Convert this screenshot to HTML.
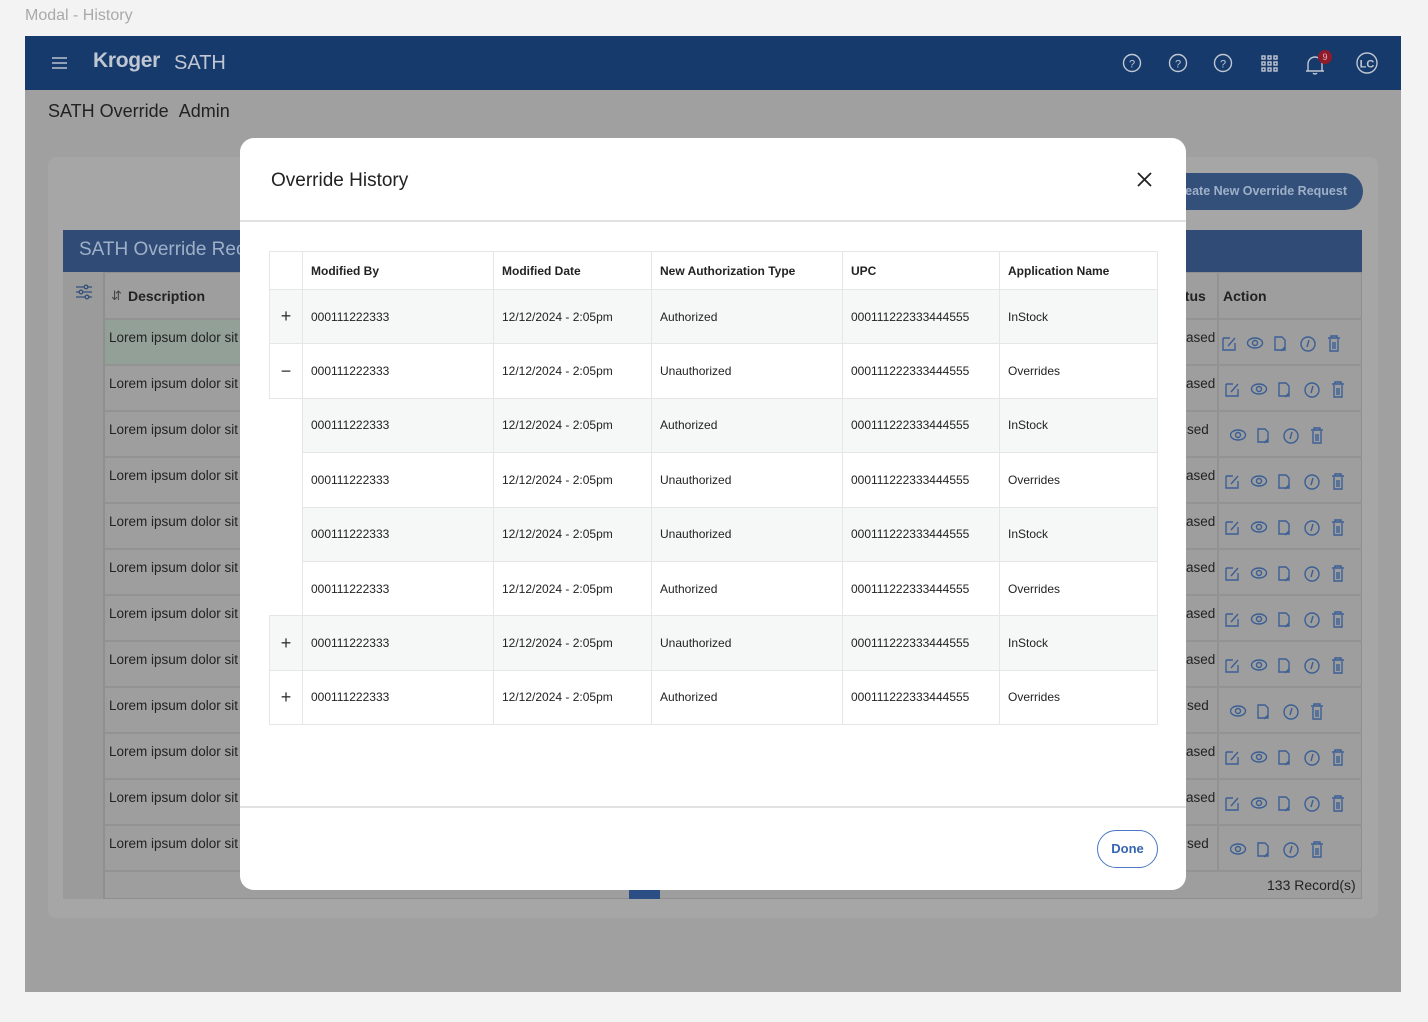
<!DOCTYPE html>
<html><head><meta charset="utf-8"><style>
*{box-sizing:border-box;margin:0;padding:0}
body{width:1428px;height:1022px;background:#f3f3f3;font-family:"Liberation Sans",Arial,sans-serif;position:relative;overflow:hidden}
.a{position:absolute}
.ttl{left:25px;top:7px;font-size:16px;color:#a9a9a9}
.frame{left:25px;top:36px;width:1376px;height:956px;background:#a0a0a0}
.hdr{left:25px;top:36px;width:1376px;height:54px;background:#163a6b}
.brow{position:absolute;left:105px;width:1257px;height:46px;border-bottom:2px solid #939393;font-size:13.5px;color:#222}
.brow .d{position:absolute;left:4px;top:10px}
.brow .s{position:absolute;left:1081px;top:10px}
.brow svg{position:absolute;top:15px}
.modal{left:240px;top:138px;width:946px;height:752px;background:#fff;border-radius:14px}
table{border-collapse:collapse;position:absolute;left:269px;top:251px;font-size:12px;color:#222}
td,th{border:1px solid #e6e6e6;text-align:left;padding:0 0 0 8px;height:54.4px}
th{height:38px;font-weight:bold}
tr.g td{background:#f6f7f7}
td.x{padding:0;text-align:center;font-size:18px;color:#333}
td.n{border:none;border-right:1px solid #e6e6e6;background:#fff!important}
</style></head><body>
<div class="a ttl">Modal - History</div>
<div class="a frame"></div>
<div class="a hdr"></div>
<svg class="a" style="left:52px;top:56px" width="16" height="14"><path d="M0 2H15M0 7H15M0 12H15" stroke="#b9c2cf" stroke-width="1.6"/></svg>
<div class="a" style="left:93px;top:49px;font-size:21px;font-weight:bold;color:#c0c7d2;letter-spacing:-0.3px">Kroger</div>
<div class="a" style="left:174px;top:52px;font-size:20px;color:#c0c7d2">SATH</div>
<svg class="a" style="left:1120px;top:50px" width="270" height="30" fill="none" stroke="#c0c7d2" stroke-width="1.4">
<circle cx="12" cy="13" r="8.5"/><circle cx="58" cy="13" r="8.5"/><circle cx="103" cy="13" r="8.5"/>
<text x="12" y="17.5" font-size="11" fill="#c0c7d2" stroke="none" text-anchor="middle" font-family="Liberation Sans">?</text>
<text x="58" y="17.5" font-size="11" fill="#c0c7d2" stroke="none" text-anchor="middle" font-family="Liberation Sans">?</text>
<text x="103" y="17.5" font-size="11" fill="#c0c7d2" stroke="none" text-anchor="middle" font-family="Liberation Sans">?</text>
<g fill="none"><rect x="142" y="6" width="3" height="3"/><rect x="148" y="6" width="3" height="3"/><rect x="154" y="6" width="3" height="3"/><rect x="142" y="12" width="3" height="3"/><rect x="148" y="12" width="3" height="3"/><rect x="154" y="12" width="3" height="3"/><rect x="142" y="18" width="3" height="3"/><rect x="148" y="18" width="3" height="3"/><rect x="154" y="18" width="3" height="3"/></g>
<path d="M188 21V14a7 7 0 0 1 14 0v7h2H186zM193 23a2.5 2.5 0 0 0 4 0"/>
<circle cx="247" cy="13" r="10"/>
<text x="247" y="17.5" font-size="11" font-weight="bold" fill="#c0c7d2" stroke="none" text-anchor="middle" font-family="Liberation Sans">LC</text>
</svg>
<div class="a" style="left:1318px;top:50px;width:14px;height:14px;border-radius:7px;background:#8e1a2a;color:#e5b7bd;font-size:9px;text-align:center;line-height:14px">9</div>
<div class="a" style="left:48px;top:101px;font-size:18px;color:#222">SATH Override &nbsp;Admin</div>
<div class="a" style="left:48px;top:157px;width:1330px;height:761px;background:#a6a6a6;border-radius:8px"></div>
<div class="a" style="left:1150px;top:173px;width:213px;height:37px;border-radius:19px;background:#33507a;color:#9fb0c8;font-size:12.5px;font-weight:bold;line-height:37px;text-align:right;padding-right:16px;white-space:nowrap;overflow:hidden">Create New Override Request</div>
<div class="a" style="left:63px;top:230px;width:1299px;height:42px;background:#304c76;color:#9fb0c8;font-size:19px;padding:9px 16px">SATH Override Records</div>
<div class="a" style="left:63px;top:272px;width:1299px;height:627px;background:#9e9e9e;border:1px solid #8f8f8f"></div>
<div class="a" style="left:63px;top:272px;width:42px;height:627px;background:#9b9b9b;border-right:2px solid #8f8f8f"></div>
<svg class="a" style="left:75px;top:284px" width="18" height="16" stroke="#33507a" stroke-width="1.3" fill="#9b9b9b"><path d="M1 3H17M1 8H17M1 13H17"/><circle cx="11" cy="3" r="1.8"/><circle cx="6" cy="8" r="1.8"/><circle cx="12" cy="13" r="1.8"/></svg>
<div class="a" style="left:105px;top:272px;width:1257px;height:48px;border-bottom:2px solid #939393"></div>
<div class="a" style="left:111px;top:288px;font-size:13px;color:#444">&#8693;</div>
<div class="a" style="left:128px;top:288px;font-size:14px;font-weight:bold;color:#222">Description</div>
<div class="a" style="left:1163px;top:288px;font-size:14px;font-weight:bold;color:#222">Status</div>
<div class="a" style="left:1223px;top:288px;font-size:14px;font-weight:bold;color:#222">Action</div>
<div class="a" style="left:1217px;top:272px;width:2px;height:600px;background:#929292"></div>
<svg width="0" height="0" style="position:absolute"><defs>
<g id="e" fill="none" stroke="#3b5f95" stroke-width="1.4"><path d="M1 3H8M1 3V15H13V8M6 11L13 3"/></g>
<g id="r" fill="none" stroke="#3b5f95" stroke-width="1.4"><ellipse cx="8" cy="8" rx="7.5" ry="5"/><circle cx="8" cy="8" r="2.5"/><path d="M28 2H35L38 5V15H28ZM38 12L34 16"/><circle cx="61" cy="9" r="7"/><path d="M62 5L60 12"/><path d="M81 3H93M84 3V1H90V3M83 4V16H91V4M86 7V14M88 7V14"/></g>
</defs></svg>
<div class="a" style="left:105px;top:320px;width:300px;height:44px;background:#93a097"></div>
<div class="brow" style="top:320px"><span class="d">Lorem ipsum dolor sit amet</span><span class="s">ased</span><svg style="left:1117px" width="130" height="20"><use href="#e"/><use href="#r" x="25"/></svg></div>
<div class="brow" style="top:366px"><span class="d">Lorem ipsum dolor sit amet</span><span class="s">ased</span><svg style="left:1120px" width="130" height="20"><use href="#e"/><use href="#r" x="26"/></svg></div>
<div class="brow" style="top:412px"><span class="d">Lorem ipsum dolor sit amet</span><span class="s" style="left:1082px">sed</span><svg style="left:1125px" width="130" height="20"><use href="#r"/></svg></div>
<div class="brow" style="top:458px"><span class="d">Lorem ipsum dolor sit amet</span><span class="s">ased</span><svg style="left:1120px" width="130" height="20"><use href="#e"/><use href="#r" x="26"/></svg></div>
<div class="brow" style="top:504px"><span class="d">Lorem ipsum dolor sit amet</span><span class="s">ased</span><svg style="left:1120px" width="130" height="20"><use href="#e"/><use href="#r" x="26"/></svg></div>
<div class="brow" style="top:550px"><span class="d">Lorem ipsum dolor sit amet</span><span class="s">ased</span><svg style="left:1120px" width="130" height="20"><use href="#e"/><use href="#r" x="26"/></svg></div>
<div class="brow" style="top:596px"><span class="d">Lorem ipsum dolor sit amet</span><span class="s">ased</span><svg style="left:1120px" width="130" height="20"><use href="#e"/><use href="#r" x="26"/></svg></div>
<div class="brow" style="top:642px"><span class="d">Lorem ipsum dolor sit amet</span><span class="s">ased</span><svg style="left:1120px" width="130" height="20"><use href="#e"/><use href="#r" x="26"/></svg></div>
<div class="brow" style="top:688px"><span class="d">Lorem ipsum dolor sit amet</span><span class="s" style="left:1082px">sed</span><svg style="left:1125px" width="130" height="20"><use href="#r"/></svg></div>
<div class="brow" style="top:734px"><span class="d">Lorem ipsum dolor sit amet</span><span class="s">ased</span><svg style="left:1120px" width="130" height="20"><use href="#e"/><use href="#r" x="26"/></svg></div>
<div class="brow" style="top:780px"><span class="d">Lorem ipsum dolor sit amet</span><span class="s">ased</span><svg style="left:1120px" width="130" height="20"><use href="#e"/><use href="#r" x="26"/></svg></div>
<div class="brow" style="top:826px"><span class="d">Lorem ipsum dolor sit amet</span><span class="s" style="left:1082px">sed</span><svg style="left:1125px" width="130" height="20"><use href="#r"/></svg></div>
<div class="a" style="left:629px;top:890px;width:31px;height:9px;background:#2b4f85"></div>
<div class="a" style="left:1267px;top:877px;font-size:14px;color:#222">133 Record(s)</div>

<div class="a modal"></div>
<div class="a" style="left:271px;top:170px;font-size:19px;color:#222">Override History</div>
<svg class="a" style="left:1137px;top:172px" width="15" height="15"><path d="M1 1L14 14M14 1L1 14" stroke="#222" stroke-width="1.8"/></svg>
<div class="a" style="left:240px;top:220px;width:946px;height:2px;background:#e2e2e2"></div>
<table>
<tr><th style="width:33px"></th><th style="width:191px">Modified By</th><th style="width:158px">Modified Date</th><th style="width:191px">New Authorization Type</th><th style="width:157px">UPC</th><th style="width:158px">Application Name</th></tr>
<tr class="g"><td class="x">+</td><td>000111222333</td><td>12/12/2024 - 2:05pm</td><td>Authorized</td><td>000111222333444555</td><td>InStock</td></tr>
<tr><td class="x">&minus;</td><td>000111222333</td><td>12/12/2024 - 2:05pm</td><td>Unauthorized</td><td>000111222333444555</td><td>Overrides</td></tr>
<tr class="g"><td class="n"></td><td>000111222333</td><td>12/12/2024 - 2:05pm</td><td>Authorized</td><td>000111222333444555</td><td>InStock</td></tr>
<tr><td class="n"></td><td>000111222333</td><td>12/12/2024 - 2:05pm</td><td>Unauthorized</td><td>000111222333444555</td><td>Overrides</td></tr>
<tr class="g"><td class="n"></td><td>000111222333</td><td>12/12/2024 - 2:05pm</td><td>Unauthorized</td><td>000111222333444555</td><td>InStock</td></tr>
<tr><td class="n"></td><td>000111222333</td><td>12/12/2024 - 2:05pm</td><td>Authorized</td><td>000111222333444555</td><td>Overrides</td></tr>
<tr class="g"><td class="x">+</td><td>000111222333</td><td>12/12/2024 - 2:05pm</td><td>Unauthorized</td><td>000111222333444555</td><td>InStock</td></tr>
<tr><td class="x">+</td><td>000111222333</td><td>12/12/2024 - 2:05pm</td><td>Authorized</td><td>000111222333444555</td><td>Overrides</td></tr>
</table>
<div class="a" style="left:240px;top:806px;width:946px;height:2px;background:#e2e2e2"></div>
<div class="a" style="left:1097px;top:830px;width:61px;height:38px;border:1.5px solid #4a78c2;border-radius:19px;color:#3565b0;font-size:13px;font-weight:bold;text-align:center;line-height:35px">Done</div>
</body></html>
